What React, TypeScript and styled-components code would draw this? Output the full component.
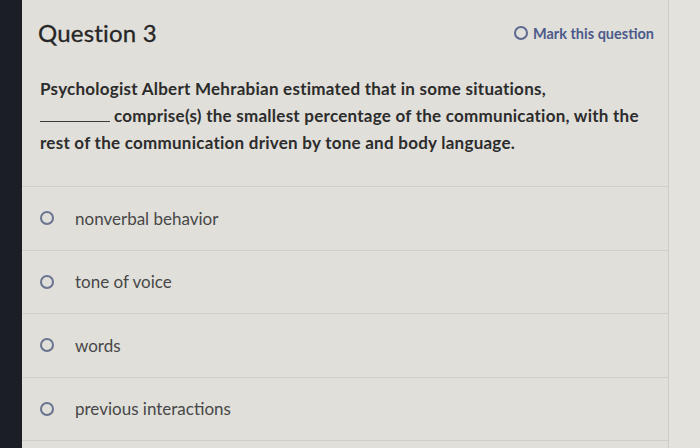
import React from "react";
import styled, { createGlobalStyle } from "styled-components";

const Global = createGlobalStyle`
  html, body { margin: 0; padding: 0; background: #e2e1dc; }
  body { font-family: "Lato", "Open Sans", sans-serif; width: 700px; height: 448px; overflow: hidden; }
  #root { width: 700px; height: 448px; }
`;

const Page = styled.div`
  display: flex;
  width: 700px;
  height: 448px;
  background: #e3e2dd;
`;

const SideBar = styled.div`
  width: 22px;
  flex: none;
  background: #1b1e25;
`;

const Card = styled.div`
  width: 646px;
  flex: none;
  background: #e0dfda;
  border-right: 1px solid #cecdc8;
  display: flex;
  flex-direction: column;
`;

const Header = styled.div`
  height: 66px;
  display: flex;
  align-items: center;
  justify-content: space-between;
  padding: 0 14px 0 16px;
  box-sizing: border-box;
`;

const Title = styled.h2`
  margin: 0 0 2px;
  font-size: 24px;
  font-weight: 400;
  color: #262626;
  letter-spacing: 0.2px;
  -webkit-text-stroke: 0.3px #262626;
`;

const MarkButton = styled.div`
  display: flex;
  align-items: center;
  gap: 5px;
  font-size: 14.5px;
  font-weight: 700;
  color: #4c5a8a;
`;

const Radio = styled.span<{ $size?: number; $color?: string }>`
  display: inline-block;
  box-sizing: border-box;
  width: ${(p) => p.$size ?? 14}px;
  height: ${(p) => p.$size ?? 14}px;
  border-radius: 50%;
  border: 2px solid ${(p) => p.$color ?? "#6a7390"};
  flex: none;
`;

const QuestionText = styled.p`
  margin: 0;
  padding: 9px 24px 30px 18px;
  font-size: 17px;
  line-height: 27px;
  font-weight: 700;
  letter-spacing: 0.25px;
  color: #2c2c2c;
`;

const Blank = styled.span`
  display: inline-block;
  width: 70px;
  height: 14px;
  border-bottom: 1px solid #3a3a3a;
  margin-right: 4px;
`;

const OptionList = styled.div`
  display: flex;
  flex-direction: column;
  border-top: 1px solid #cfcec9;
`;

const OptionRow = styled.label`
  height: 63.5px;
  box-sizing: border-box;
  display: flex;
  align-items: center;
  gap: 21px;
  padding: 0 0 0 18px;
  border-bottom: 1px solid #cfcec9;
  font-size: 17px;
  color: #474747;
`;

const options = [
  "nonverbal behavior",
  "tone of voice",
  "words",
  "previous interactions",
];

export default function App() {
  return (
    <>
      <Global />
      <Page>
        <SideBar />
        <Card>
          <Header>
            <Title>Question 3</Title>
            <MarkButton>
              <Radio $size={14} $color="#5d6890" />
              Mark this question
            </MarkButton>
          </Header>
          <QuestionText>
            Psychologist Albert Mehrabian estimated that in some situations,
            <br />
            <Blank />
            comprise(s) the smallest percentage of the communication, with the
            rest of the communication driven by tone and body language.
          </QuestionText>
          <OptionList>
            {options.map((o) => (
              <OptionRow key={o}>
                <Radio />
                {o}
              </OptionRow>
            ))}
          </OptionList>
        </Card>
      </Page>
    </>
  );
}
